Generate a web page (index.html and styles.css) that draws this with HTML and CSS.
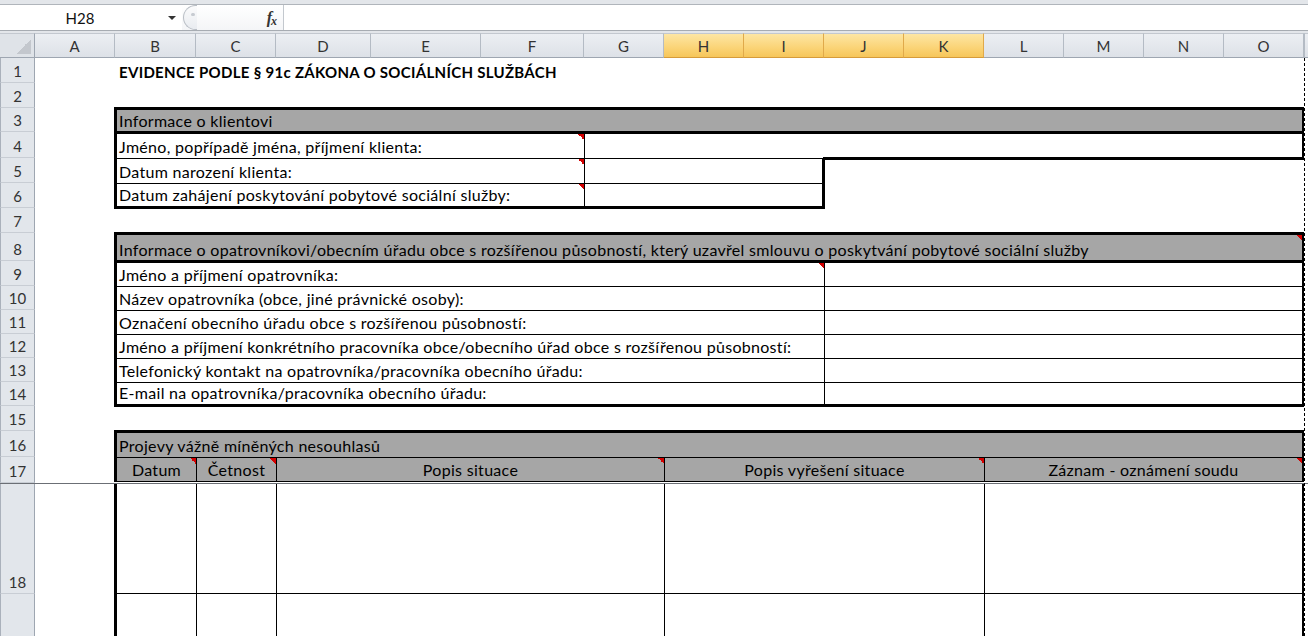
FILE: index.html
```html
<!DOCTYPE html>
<html lang="cs">
<head>
<meta charset="utf-8">
<title>Evidence</title>
<link rel="stylesheet" href="styles.css">
</head>
<body>
<div class="app">
  <div class="topstrip"></div>
  <div class="fbar">
    <div class="namebox"><span class="name">H28</span><span class="caret"></span></div>
    <div class="fxbox"><span class="grip"><span class="gripdot"></span></span><span class="fx">f<span class="fxx">x</span></span></div>
    <div class="finput"></div>
  </div>
  <div class="fgap"></div>
  <div class="sheet">
    <div class="pane top">
      <div class="ch corner r0"></div>
      <div class="ch r0">A</div>
      <div class="ch r0">B</div>
      <div class="ch r0">C</div>
      <div class="ch r0">D</div>
      <div class="ch r0">E</div>
      <div class="ch r0">F</div>
      <div class="ch r0">G</div>
      <div class="ch sel r0">H</div>
      <div class="ch sel r0">I</div>
      <div class="ch sel r0">J</div>
      <div class="ch sel r0">K</div>
      <div class="ch r0">L</div>
      <div class="ch r0">M</div>
      <div class="ch r0">N</div>
      <div class="ch r0">O</div>
      <div class="ch last r0"></div>

      <div class="rh r1">1</div>
      <div class="rh r2">2</div>
      <div class="rh r3">3</div>
      <div class="rh r4">4</div>
      <div class="rh r5">5</div>
      <div class="rh r6">6</div>
      <div class="rh r7">7</div>
      <div class="rh r8">8</div>
      <div class="rh r9">9</div>
      <div class="rh r10">10</div>
      <div class="rh r11">11</div>
      <div class="rh r12">12</div>
      <div class="rh r13">13</div>
      <div class="rh r14">14</div>
      <div class="rh r15">15</div>
      <div class="rh r16">16</div>
      <div class="rh r17">17</div>

      <div class="c title r1 cBO">EVIDENCE PODLE § 91c ZÁKONA O SOCIÁLNÍCH SLUŽBÁCH</div>

      <!-- table 1 -->
      <div class="c gray r3 cBO bt3 bl3 br3">Informace o klientovi</div>
      <div class="c r4 cBF bt3 bl3 cm">Jméno, popřípadě jména, příjmení klienta:</div>
      <div class="c r4 cGO bt3 bl1 br3"></div>
      <div class="c r5 cBF bt1 bl3 cm">Datum narození klienta:</div>
      <div class="c r5 cGI bt1 bl1 br3"></div>
      <div class="c r5 cJO bt3 edge"></div>
      <div class="c r6 cBF bt1 bl3 bb3 cm">Datum zahájení poskytování pobytové sociální služby:</div>
      <div class="c r6 cGI bt1 bl1 br3 bb3"></div>

      <!-- table 2 -->
      <div class="c gray r8 cBO bt3 bl3 br3 cm">Informace o opatrovníkovi/obecním úřadu obce s rozšířenou působností, který uzavřel smlouvu o poskytvání pobytové sociální služby</div>
      <div class="c r9 cBI bt3 bl3 cm">Jméno a příjmení opatrovníka:</div>
      <div class="c r9 cJO bt3 bl1 br3"></div>
      <div class="c r10 cBI bt1 bl3">Název opatrovníka (obce, jiné právnické osoby):</div>
      <div class="c r10 cJO bt1 bl1 br3"></div>
      <div class="c r11 cBI bt1 bl3">Označení obecního úřadu obce s rozšířenou působností:</div>
      <div class="c r11 cJO bt1 bl1 br3"></div>
      <div class="c r12 cBI bt1 bl3">Jméno a příjmení konkrétního pracovníka obce/obecního úřad obce s rozšířenou působností:</div>
      <div class="c r12 cJO bt1 bl1 br3"></div>
      <div class="c r13 cBI bt1 bl3">Telefonický kontakt na opatrovníka/pracovníka obecního úřadu:</div>
      <div class="c r13 cJO bt1 bl1 br3"></div>
      <div class="c r14 cBI bt1 bl3 bb3">E-mail na opatrovníka/pracovníka obecního úřadu:</div>
      <div class="c r14 cJO bt1 bl1 br3 bb3"></div>

      <!-- table 3 head -->
      <div class="c gray r16 cBO bt3 bl3 br3">Projevy vážně míněných nesouhlasů</div>
      <div class="c gray colhead r17 cB bt1 bl3 bb1 cm">Datum</div>
      <div class="c gray colhead r17 cC bt1 bl1 bb1 cm">Četnost</div>
      <div class="c gray colhead r17 cDG bt1 bl1 bb1 cm">Popis situace</div>
      <div class="c gray colhead r17 cHK bt1 bl1 bb1 cm">Popis vyřešení situace</div>
      <div class="c gray colhead r17 cLO bt1 bl1 br3 bb1 cm">Záznam - oznámení soudu</div>
    </div>

    <div class="pane bottom">
      <div class="rh r18">18</div>
      <div class="rh r19"></div>

      <div class="c r18 cB bl3 bb1"></div>
      <div class="c r18 cC bl1 bb1"></div>
      <div class="c r18 cDG bl1 bb1"></div>
      <div class="c r18 cHK bl1 bb1"></div>
      <div class="c r18 cLO bl1 br3 bb1"></div>

      <div class="c r19 cB bl3"></div>
      <div class="c r19 cC bl1"></div>
      <div class="c r19 cDG bl1"></div>
      <div class="c r19 cHK bl1"></div>
      <div class="c r19 cLO bl1 br3"></div>
    </div>

    <div class="pagebreak"></div>
  </div>
</div>
</body>
</html>
```

FILE: styles.css
```css
* { box-sizing: border-box; margin: 0; padding: 0; }

html, body {
  width: 1308px;
  height: 636px;
  overflow: hidden;
  background: #fff;
}

body {
  font-family: Lato, "Liberation Sans", sans-serif;
  font-size: 15px;
  color: #000;
}

.app {
  width: 1308px;
  height: 636px;
  display: flex;
  flex-direction: column;
  overflow: hidden;
}

/* ---------- formula bar ---------- */
.topstrip {
  height: 5px;
  background: #e3e6ea;
  border-bottom: 1px solid #b0b5bb;
}

.fbar {
  height: 26px;
  display: flex;
  background: #fff;
  border-bottom: 1px solid #a7acb2;
}

.namebox {
  width: 182px;
  display: flex;
  align-items: center;
  background: #fff;
}

.name {
  width: 160px;
  text-align: center;
  font-size: 15px;
  color: #111;
}

.caret {
  margin-left: 8px;
  width: 0;
  height: 0;
  border-left: 4px solid transparent;
  border-right: 4px solid transparent;
  border-top: 4px solid #333;
}

.fxbox {
  width: 102px;
  display: flex;
  align-items: center;
  justify-content: space-between;
  border-right: 1px solid #c3c8ce;
  background: linear-gradient(#ffffff, #f4f5f7);
}

.grip {
  width: 14px;
  height: 25px;
  margin-left: 1px;
  border: 1px solid #b9bec5;
  border-right: none;
  border-radius: 13px 0 0 13px;
  background: linear-gradient(#fbfbfc, #e9ecf0);
  display: flex;
  align-items: center;
  justify-content: center;
}

.gripdot {
  width: 4px;
  height: 3px;
  margin-left: 4px;
  margin-bottom: 6px;
  border-radius: 2px;
  background: #c7cbd1;
}

.fx {
  margin-right: 7px;
  font-family: "Liberation Serif", serif;
  font-style: italic;
  font-weight: bold;
  font-size: 16px;
  color: #333;
  letter-spacing: -1px;
}

.fxx {
  font-size: 12px;
  position: relative;
  top: 2px;
}

.finput {
  flex: 1;
  background: #fff;
}

.fgap {
  height: 2px;
  background: #e3e6ea;
}

/* ---------- sheet ---------- */
.sheet {
  position: relative;
  flex: 1;
  overflow: hidden;
  background: #fff;
}

.pane {
  display: grid;
  grid-template-columns: 35px 80px 81px 80px 95px 110px 103px 80px 80px 80px 80px 80px 80px 80px 80px 80px 4px;
}

.pane.top {
  grid-template-rows: 25px 25px 25px 24px 26px 25px 25px 25px 28px 25px 24px 24px 24px 24px 24px 25px 26px 26px;
}

.pane.bottom {
  border-top: 1px solid #6b6f75;
  grid-template-rows: 110px 111px;
}

/* row placement */
.r0 { grid-row: 1; }
.r1 { grid-row: 2; }
.r2 { grid-row: 3; }
.r3 { grid-row: 4; }
.r4 { grid-row: 5; }
.r5 { grid-row: 6; }
.r6 { grid-row: 7; }
.r7 { grid-row: 8; }
.r8 { grid-row: 9; }
.r9 { grid-row: 10; }
.r10 { grid-row: 11; }
.r11 { grid-row: 12; }
.r12 { grid-row: 13; }
.r13 { grid-row: 14; }
.r14 { grid-row: 15; }
.r15 { grid-row: 16; }
.r16 { grid-row: 17; }
.r17 { grid-row: 18; }
.r18 { grid-row: 1; }
.r19 { grid-row: 2; }

/* column spans */
.cBO { grid-column: 3 / 17; }
.cBF { grid-column: 3 / 8; }
.cGO { grid-column: 8 / 17; }
.cGI { grid-column: 8 / 11; }
.cJO { grid-column: 11 / 17; }
.cBI { grid-column: 3 / 11; }
.cB { grid-column: 3 / 4; }
.cC { grid-column: 4 / 5; }
.cDG { grid-column: 5 / 9; }
.cHK { grid-column: 9 / 13; }
.cLO { grid-column: 13 / 17; }

/* headers */
.ch {
  display: flex;
  align-items: center;
  justify-content: center;
  background: linear-gradient(#eceff3, #dde1e7);
  border-right: 1px solid #b4bbc4;
  border-bottom: 1px solid #9ea6b1;
  border-top: 1px solid #c3c8cf;
  color: #333;
  font-size: 15px;
  padding-top: 1px;
}

.ch.corner {
  background-color: #dfe3e8;
  background-image: linear-gradient(to top left, #c3c7cd 50%, transparent 50%);
  background-size: 15px 15px;
  background-repeat: no-repeat;
  background-position: right 3px bottom 3px;
  border-right: 1px solid #9ea6b1;
}

.ch.sel {
  background: linear-gradient(#fde6a4, #fbd57a 55%, #f6c65a);
  border-right: 1px solid #e0a94a;
  border-bottom: 1px solid #d69b3a;
}

.ch.last {
  border-right: none;
  border-left: 1px solid #b4bbc4;
}

.rh {
  grid-column: 1;
  display: flex;
  align-items: flex-end;
  justify-content: center;
  padding-bottom: 2px;
  background: #e2e6eb;
  border-left: 1px solid #aab1bb;
  border-right: 1px solid #9ea6b1;
  border-bottom: 1px solid #c8cdd4;
  color: #333;
  font-size: 15px;
  line-height: 18px;
}

/* cells */
.c {
  display: flex;
  align-items: flex-end;
  padding: 0 2px 2px 2px;
  font-size: 16px;
  letter-spacing: 0.3px;
  line-height: 18px;
  white-space: nowrap;
  min-width: 0;
}

.title {
  font-weight: bold;
  font-size: 15px;
  padding-left: 4px;
}

.gray { background-color: #a6a6a6; }

.colhead { justify-content: center; }

.cm {
  background-image: linear-gradient(to bottom left, #d40000 50%, transparent 50%);
  background-size: 6px 6px;
  background-repeat: no-repeat;
  background-position: top right;
}

.bt3 { border-top: 3px solid #000; margin-top: -1px; }
.bl3 { border-left: 3px solid #000; margin-left: -1px; }
.br3 { border-right: 3px solid #000; margin-right: -1px; }
.bb3 { border-bottom: 3px solid #000; margin-bottom: -1px; }
.bt1 { border-top: 1px solid #000; }
.bl1 { border-left: 1px solid #000; }
.bb1 { border-bottom: 1px solid #000; }

.colhead.bb1 { margin-bottom: 1px; }

.edge { margin-right: -1px; margin-left: -1px; }

.pagebreak {
  position: absolute;
  left: 1304px;
  top: 25px;
  bottom: 0;
  width: 1px;
  background: repeating-linear-gradient(to bottom, #000 0 3px, #fff 3px 5px);
}
```
